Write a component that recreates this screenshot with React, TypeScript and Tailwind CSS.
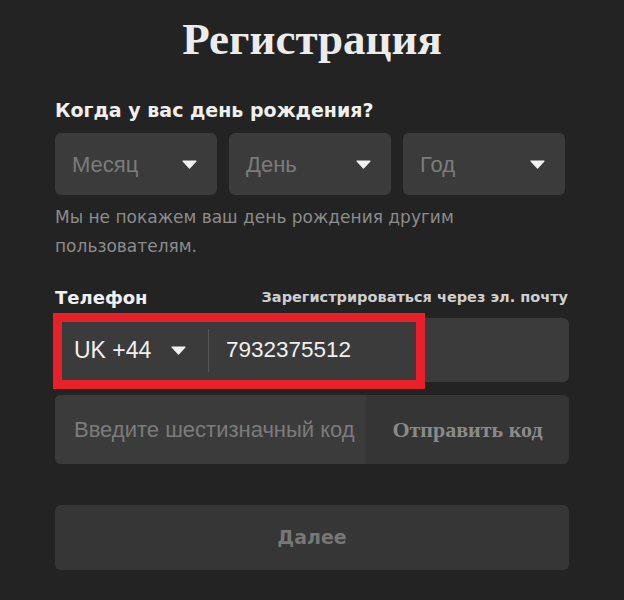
import React from "react";

const sans = { fontFamily: '"Liberation Sans", Arial, sans-serif' };
const dv = { fontFamily: '"DejaVu Sans", Verdana, sans-serif' };
const serif = { fontFamily: '"Liberation Serif", "Times New Roman", serif' };

function Tri() {
  return (
    <svg width="15" height="9" viewBox="0 0 15 9" className="shrink-0">
      <path d="M1 1 L14 1 L7.5 8 Z" fill="#f2f2f2" stroke="#f2f2f2" strokeWidth="1.2" strokeLinejoin="round" />
    </svg>
  );
}

function Select({ label }: { label: string }) {
  return (
    <div className="h-[62px] rounded-md bg-[#3b3b3b] flex items-center justify-between pl-[17px] pr-[20px]">
      <span className="text-[22px] text-[#7b7b7b]">{label}</span>
      <Tri />
    </div>
  );
}

export default function App() {
  return (
    <div className="w-[624px] h-[600px] bg-[#232323] overflow-hidden" style={sans}>
      <div className="pl-[55px] pr-[55px] pt-[13px]">
        <h1 className="text-center text-[45px] leading-[52px] font-bold text-[#ececec]" style={serif}>
          Регистрация
        </h1>
        <div className="mt-[33px] text-[19px] leading-[24px] font-bold text-[#f0f0f0]" style={dv}>Когда у вас день рождения?</div>
        <div className="mt-[11px] grid grid-cols-3 gap-[12px] w-[510px]">
          <Select label="Месяц" />
          <Select label="День" />
          <Select label="Год" />
        </div>
        <div className="mt-[8px] text-[17px] leading-[29px] text-[#8c8c8c]" style={dv}>
          Мы не покажем ваш день рождения другим
          <br />
          пользователям.
        </div>
        <div className="mt-[25px] flex items-end justify-between pr-[1px]" style={dv}>
          <span className="text-[18px] leading-[24px] font-bold text-[#f0f0f0]">Телефон</span>
          <span className="text-[14.5px] leading-[20px] font-bold text-[#cfcfcf] mb-[3px]">Зарегистрироваться через эл. почту</span>
        </div>
        <div className="relative mt-[8px]">
          <div className="h-[64px] rounded-md bg-[#3b3b3b] flex items-center">
            <div className="flex items-center pl-[19px] w-[153px] shrink-0">
              <span className="text-[23px] text-[#f0f0f0]">UK +44</span>
              <span className="ml-[20px]"><Tri /></span>
            </div>
            <div className="w-px h-[43px] bg-[#555555]"></div>
            <span className="ml-[17px] text-[22.5px] text-[#f0f0f0]">7932375512</span>
          </div>
          <div className="absolute left-[-2px] top-[-5px] w-[372px] h-[76px] border-[9px] border-[#e8202a]"></div>
        </div>
        <div className="mt-[13px] h-[69px] rounded-md bg-[#353535] flex overflow-hidden">
          <div className="w-[311px] bg-[#3b3b3b] flex items-center pl-[19px]">
            <span className="text-[22px] text-[#7b7b7b] whitespace-nowrap">Введите шестизначный код</span>
          </div>
          <div className="flex-1 flex items-center justify-center">
            <span className="text-[22px] font-bold text-[#8a8a8a]" style={serif}>Отправить код</span>
          </div>
        </div>
        <div className="mt-[41px] h-[65px] rounded-md bg-[#363636] flex items-center justify-center">
          <span className="text-[19px] font-bold text-[#777777]" style={dv}>Далее</span>
        </div>
      </div>
    </div>
  );
}
